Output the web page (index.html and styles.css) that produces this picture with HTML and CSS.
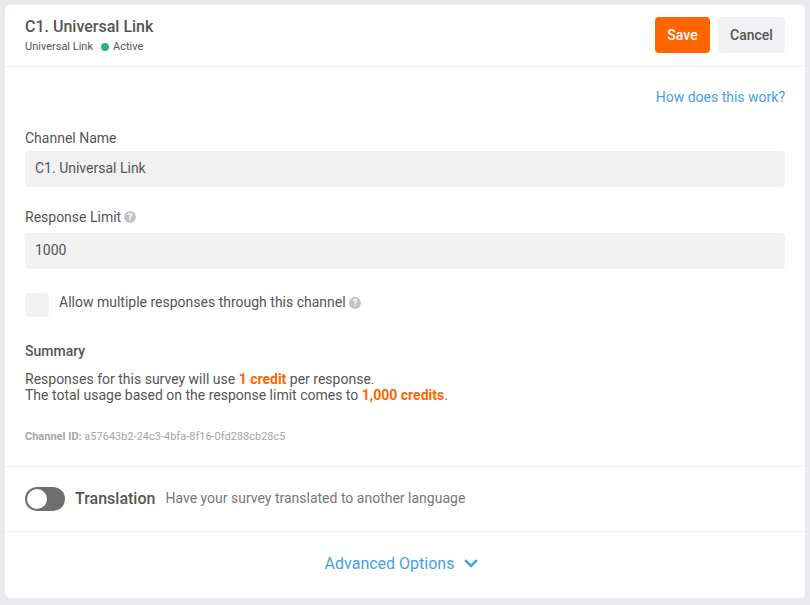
FILE: index.html
```html
<!DOCTYPE html>
<html lang="en">
<head>
    <meta charset="UTF-8">
    <meta name="viewport" content="width=device-width, initial-scale=1.0">
    <title>Channel Settings</title>
    <link rel="stylesheet" href="styles.css">
</head>
<body>
    <div class="panel">
        <div class="header">
            <div class="header-text">
                <h1>C1. Universal Link</h1>
                <div class="meta">
                    <span>Universal Link</span>
                    <span class="dot"></span>
                    <span>Active</span>
                </div>
            </div>
            <div class="actions">
                <button class="btn btn-save">Save</button>
                <button class="btn btn-cancel">Cancel</button>
            </div>
        </div>

        <div class="content">
            <div class="help-row"><a href="#" class="link">How does this work?</a></div>

            <label class="label label-name">Channel Name</label>
            <div class="field">C1. Universal Link</div>

            <label class="label label-limit">Response Limit
                <svg class="help" viewBox="0 0 12 12"><circle cx="6" cy="6" r="6" fill="#c4c4c4"/><text x="6" y="9.2" text-anchor="middle" class="help-mark">?</text></svg>
            </label>
            <div class="field">1000</div>

            <div class="check-row">
                <span class="checkbox"></span>
                <span class="check-label">Allow multiple responses through this channel</span>
                <svg class="help" viewBox="0 0 12 12"><circle cx="6" cy="6" r="6" fill="#c4c4c4"/><text x="6" y="9.2" text-anchor="middle" class="help-mark">?</text></svg>
            </div>

            <h2 class="summary-title">Summary</h2>
            <p class="summary">Responses for this survey will use <b>1 credit</b> per response.<br>The total usage based on the response limit comes to <b>1,000 credits</b>.</p>

            <div class="channel-id"><b>Channel ID:</b> a57643b2-24c3-4bfa-8f16-0fd288cb28c5</div>
        </div>

        <div class="translation">
            <span class="toggle"><span class="knob"></span></span>
            <span class="translation-title">Translation</span>
            <span class="translation-desc">Have your survey translated to another language</span>
        </div>

        <div class="advanced">
            <a href="#" class="link">Advanced Options</a>
            <svg class="chevron" viewBox="0 0 14 9"><path d="M1.2 1.2 7 7l5.8-5.8" fill="none" stroke="#3f9fe8" stroke-width="2.5"/></svg>
        </div>
    </div>
</body>
</html>
```

FILE: styles.css
```css
* {
    box-sizing: border-box;
}
body {
    margin: 0;
    height: 605px;
    overflow: hidden;
    background-color: #e9e9ee;
    padding: 5px 5px 7px;
    font-family: Roboto, sans-serif;
    color: #555;
}
.panel {
    background-color: #fff;
    border-radius: 5px;
    height: 593px;
    display: flex;
    flex-direction: column;
}
.header {
    height: 62px;
    padding: 12px 20px 0;
    border-bottom: 1px solid #f1f1f3;
    display: flex;
    justify-content: space-between;
    align-items: flex-start;
    flex-shrink: 0;
}
.header h1 {
    margin: 0;
    font-size: 16px;
    line-height: 20px;
    font-weight: 500;
    color: #555;
}
.meta {
    display: flex;
    align-items: center;
    margin-top: 3px;
    font-size: 11px;
    line-height: 14px;
}
.dot {
    width: 8px;
    height: 8px;
    border-radius: 50%;
    background-color: #2bb47c;
    margin: 0 4px 0 8px;
}
.actions {
    display: flex;
    gap: 8px;
}
.btn {
    height: 36px;
    border: 0;
    border-radius: 4px;
    font-family: inherit;
    font-size: 14px;
    font-weight: 500;
    padding: 0;
}
.btn-save {
    width: 55px;
    background-color: #f60;
    color: #fff;
}
.btn-cancel {
    width: 67px;
    background-color: #f1f1f3;
    color: #555;
}
.content {
    padding: 0 20px;
    flex: 1;
}
.help-row {
    text-align: right;
    padding-top: 21px;
    line-height: 18px;
}
.link {
    color: #44a1e8;
    text-decoration: none;
    font-size: 14px;
}
.label {
    display: flex;
    align-items: center;
    gap: 3px;
    font-size: 14px;
    line-height: 18px;
}
.label-name {
    margin-top: 23px;
    margin-bottom: 4px;
}
.label-limit {
    margin-top: 21px;
    margin-bottom: 7px;
}
.field {
    height: 36px;
    background-color: #f1f1f1;
    border-radius: 4px;
    padding: 0 10px;
    font-size: 14px;
    line-height: 35px;
}
.help {
    width: 12px;
    height: 12px;
    flex-shrink: 0;
}
.help-mark {
    font-size: 9px;
    font-weight: 700;
    fill: #fff;
}
.check-row {
    display: flex;
    align-items: center;
    margin-top: 24px;
    font-size: 14px;
}
.checkbox {
    width: 24px;
    height: 24px;
    border-radius: 4px;
    background-color: #f1f1f1;
    margin-right: 10px;
}
.check-label {
    margin-right: 3px;
    position: relative;
    top: -3px;
}
.check-row .help {
    position: relative;
    top: -2px;
}
.summary-title {
    margin: 25px 0 0;
    font-size: 14px;
    line-height: 18px;
    font-weight: 500;
}
.summary {
    margin: 11px 0 0;
    font-size: 14px;
    line-height: 16px;
}
.summary b {
    color: #f60;
    font-weight: 700;
}
.channel-id {
    margin-top: 27px;
    font-size: 11px;
    line-height: 14px;
    color: #a6a6a6;
}
.channel-id b {
    font-weight: 700;
}
.translation {
    height: 66px;
    margin-top: 22px;
    padding: 0 20px 2px;
    border-top: 1px solid #f1f1f3;
    border-bottom: 1px solid #f1f1f3;
    display: flex;
    align-items: center;
    flex-shrink: 0;
}
.toggle {
    width: 40px;
    height: 24px;
    border-radius: 12px;
    background-color: #6f6f6f;
    padding: 2px;
    margin: 2px 10px 0 0;
}
.knob {
    display: block;
    width: 20px;
    height: 20px;
    border-radius: 50%;
    background-color: #fff;
}
.translation-title {
    font-size: 16px;
    font-weight: 500;
    margin-right: 10px;
}
.translation-desc {
    font-size: 14px;
    color: #777;
}
.advanced {
    flex: 1;
    display: flex;
    justify-content: center;
    align-items: center;
    gap: 10px;
    padding-bottom: 3px;
}
.advanced .link {
    font-size: 16px;
}
.chevron {
    width: 14px;
    height: 9px;
    margin-right: 7px;
}
```
